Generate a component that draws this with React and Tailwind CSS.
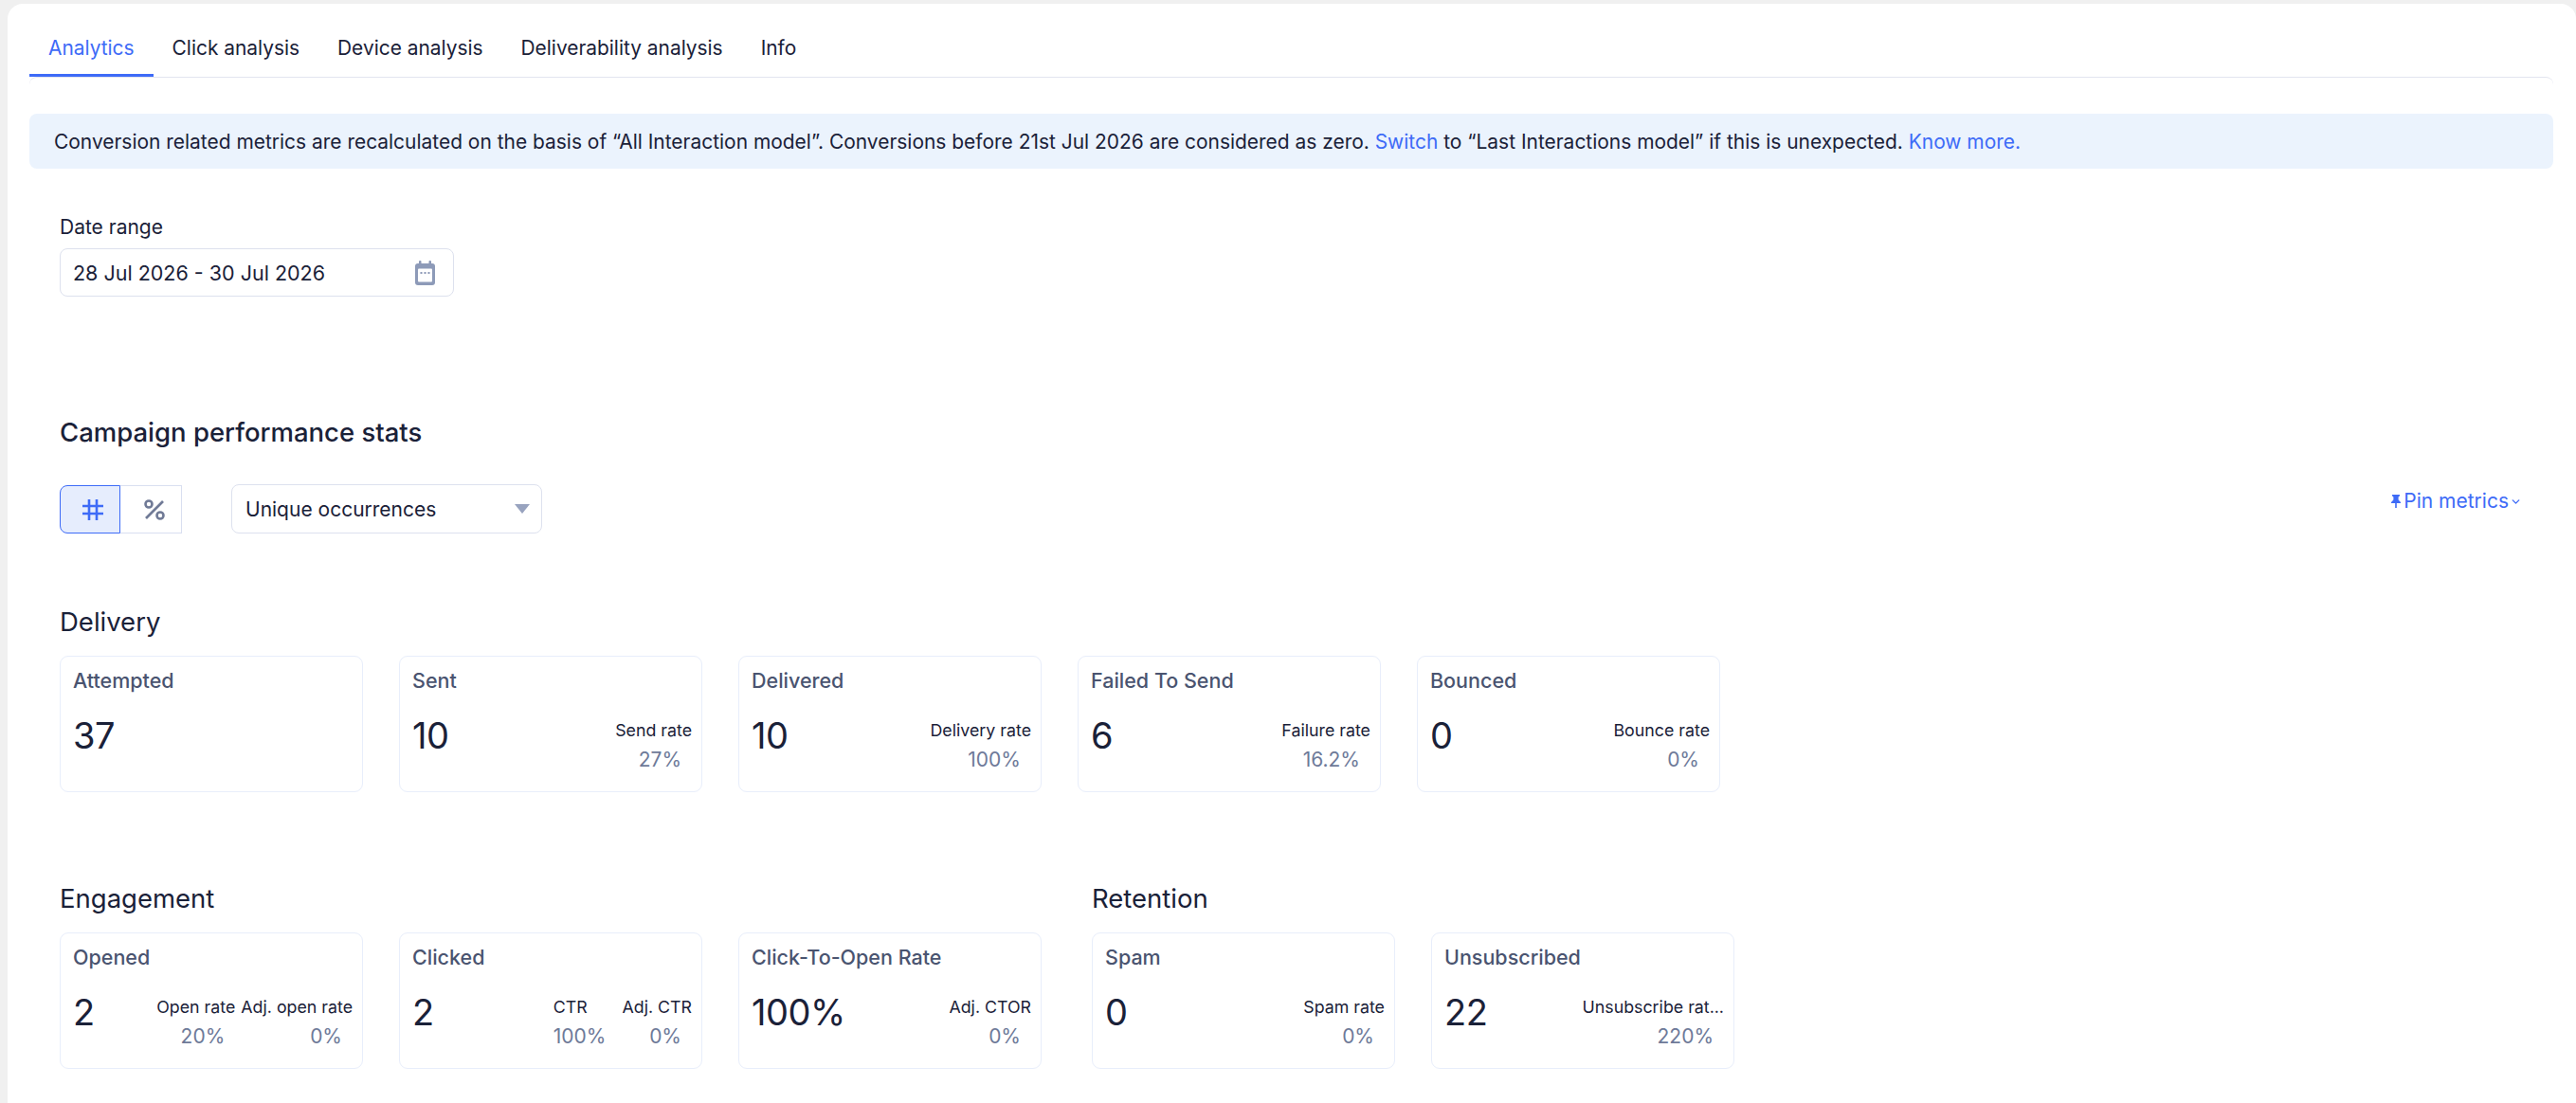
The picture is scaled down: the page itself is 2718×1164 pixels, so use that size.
import React from 'react';
import { ChevronDown } from 'lucide-react';

const tabs = ['Analytics', 'Click analysis', 'Device analysis', 'Deliverability analysis', 'Info'];

const delivery = [
    { title: 'Attempted', value: '37', rates: [] },
    { title: 'Sent', value: '10', rates: [{ label: 'Send rate', value: '27%' }] },
    { title: 'Delivered', value: '10', rates: [{ label: 'Delivery rate', value: '100%' }] },
    { title: 'Failed To Send', value: '6', rates: [{ label: 'Failure rate', value: '16.2%' }] },
    { title: 'Bounced', value: '0', rates: [{ label: 'Bounce rate', value: '0%' }] },
];

const engagement = [
    { title: 'Opened', value: '2', rates: [{ label: 'Open rate', value: '20%' }, { label: 'Adj. open rate', value: '0%' }] },
    { title: 'Clicked', value: '2', rates: [{ label: 'CTR', value: '100%' }, { label: 'Adj. CTR', value: '0%' }] },
    { title: 'Click-To-Open Rate', value: '100%', rates: [{ label: 'Adj. CTOR', value: '0%' }] },
];

const retention = [
    { title: 'Spam', value: '0', rates: [{ label: 'Spam rate', value: '0%' }] },
    { title: 'Unsubscribed', value: '22', rates: [{ label: 'Unsubscribe rat...', value: '220%' }] },
];

const StatCard = ({ stat }) => {
    return (
        <div className="w-[320px] h-[144px] shrink-0 rounded-[9px] border border-[#e8eefb] bg-white pl-[13px] pr-[10px] pt-[11px]">
            <div className="h-[28px] text-[21.5px] leading-[28px] font-medium text-[#4a5470]">{stat.title}</div>
            <div className="mt-[20px] flex justify-between items-start">
                <div className="h-[48px] text-[38px] leading-[48px] tracking-[-0.5px] text-[#1a2138]">{stat.value}</div>
                <div className="flex gap-[6px] pt-[7px]">
                    {stat.rates.map(rate => (
                        <div key={rate.label} className="flex flex-col">
                            <div className="h-[24px] text-[17.8px] leading-[24px] text-[#1a2138] whitespace-nowrap">{rate.label}</div>
                            <div className="mt-[5px] h-[28px] pr-[11px] text-right text-[21px] leading-[28px] text-[#6e7a99]">{rate.value}</div>
                        </div>
                    ))}
                </div>
            </div>
        </div>
    );
};

const CalendarIcon = () => (
    <svg width="21" height="26" viewBox="0 0 21 26">
        <rect x="4" y="0" width="2.5" height="5" rx="1" fill="#8d9ab8" />
        <rect x="14.5" y="0" width="2.5" height="5" rx="1" fill="#8d9ab8" />
        <rect x="0" y="3" width="21" height="23" rx="3" fill="#8d9ab8" />
        <rect x="3" y="8.5" width="15" height="14" rx="1" fill="#ffffff" />
        <rect x="5.5" y="12" width="2" height="2" fill="#8d9ab8" />
        <rect x="9.5" y="12" width="2" height="2" fill="#8d9ab8" />
        <rect x="13.5" y="12" width="2" height="2" fill="#8d9ab8" />
    </svg>
);

const HashIcon = () => (
    <svg width="22" height="22" viewBox="0 0 22 22" fill="none" stroke="#3e6bf7" strokeWidth="2.6">
        <path d="M7 0v22M15 0v22M0 7h22M0 15h22" />
    </svg>
);

const PercentIcon = () => (
    <svg width="22" height="22" viewBox="0 0 22 22" fill="none" stroke="#707a96" strokeWidth="2.6">
        <path d="M20 2 2 20" />
        <circle cx="5" cy="5" r="3.5" />
        <circle cx="17" cy="17" r="3.5" />
    </svg>
);

const PinIcon = () => (
    <svg width="10" height="14" viewBox="0 0 10 14" fill="#3e6bf7">
        <path d="M1 0h8v1.3L7.6 2.4v3.2L10 8v1H5.8v5H4.2V9H0V8l2.4-2.4V2.4L1 1.3z" />
    </svg>
);

const App = () => {
    return (
        <div className="h-screen overflow-hidden bg-[#f0f0f0] pt-[4px] pl-[8px] text-[#1a2138]" style={{ fontFamily: 'Inter, sans-serif' }}>
            <div className="h-full bg-white rounded-t-2xl pl-[23px] pr-[24px]">
                <div className="h-[77px] flex items-end">
                    {tabs.map((tab, i) => (
                        <div
                            key={tab}
                            className={`h-[77px] px-5 pt-[33px] text-[20.9px] leading-[28px] whitespace-nowrap border-b-[3px] ${i === 0 ? 'text-[#3e6bf7] border-[#3e6bf7]' : 'border-transparent'}`}
                        >
                            {tab}
                        </div>
                    ))}
                </div>
                <div className="border-t border-[#e2e4ef] rounded-t-lg">
                    <div className="mt-[38px] h-[58px] flex items-center rounded-lg bg-[#ebf3fd] pl-[26px] pt-[2px] text-[20.95px] whitespace-nowrap">
                        <span>Conversion related metrics are recalculated on the basis of “All Interaction model”. Conversions before 21st Jul 2026 are considered as zero. <span className="text-[#3e6bf7]">Switch</span> to “Last Interactions model” if this is unexpected. <span className="text-[#3e6bf7]">Know more.</span></span>
                    </div>

                    <div className="pl-[32px]">
                        <div className="mt-[48px] h-[27px] text-[21px] leading-[28px]">Date range</div>
                        <div className="mt-[9px] w-[416px] h-[51px] flex items-center justify-between rounded-lg border border-[#dde1ee] pl-[13px] pr-[19px] text-[21.5px]">
                            <span className="pt-[2px]">28 Jul 2026 - 30 Jul 2026</span>
                            <CalendarIcon />
                        </div>

                        <div className="mt-[127px] h-[32px] text-[27.5px] leading-[32px] font-[550]">Campaign performance stats</div>

                        <div className="mt-[39px] h-[52px] flex items-start justify-between pr-[33px]">
                            <div className="flex items-center">
                                <div className="flex h-[51px] mt-[1px]">
                                    <div className="w-[64px] flex items-center justify-center rounded-l-lg border border-[#3e6bf7] bg-[#e6edfd] pl-[6px]">
                                        <HashIcon />
                                    </div>
                                    <div className="w-[65px] flex items-center justify-center border border-l-0 border-[#d9dff0] pl-[7px]">
                                        <PercentIcon />
                                    </div>
                                </div>
                                <div className="ml-[52px] w-[328px] h-[52px] flex items-center justify-between rounded-lg border border-[#dde1ee] pl-[14px] pr-[12px] text-[21px]">
                                    <span className="pt-[2px]">Unique occurrences</span>
                                    <span className="w-0 h-0 border-l-[8px] border-r-[8px] border-t-[10px] border-l-transparent border-r-transparent border-t-[#98a3bf]"></span>
                                </div>
                            </div>
                            <div className="pt-[4px] flex items-center text-[21px] leading-[28px] text-[#3e6bf7]">
                                <PinIcon />
                                <span className="ml-[3px]">Pin metrics</span>
                                <ChevronDown size={13} strokeWidth={2.5} color="#3e6bf7" className="ml-[1px]" />
                            </div>
                        </div>

                        <div className="mt-[77px] h-[32px] text-[27.5px] leading-[32px]">Delivery</div>
                        <div className="mt-[20px] flex gap-[38px]">
                            {delivery.map(stat => <StatCard key={stat.title} stat={stat} />)}
                        </div>

                        <div className="mt-[96px] flex gap-[53px]">
                            <div>
                                <div className="h-[32px] text-[27.5px] leading-[32px]">Engagement</div>
                                <div className="mt-[20px] flex gap-[38px]">
                                    {engagement.map(stat => <StatCard key={stat.title} stat={stat} />)}
                                </div>
                            </div>
                            <div>
                                <div className="h-[32px] text-[27.5px] leading-[32px]">Retention</div>
                                <div className="mt-[20px] flex gap-[38px]">
                                    {retention.map(stat => <StatCard key={stat.title} stat={stat} />)}
                                </div>
                            </div>
                        </div>
                    </div>
                </div>
            </div>
        </div>
    );
};

export default App;
